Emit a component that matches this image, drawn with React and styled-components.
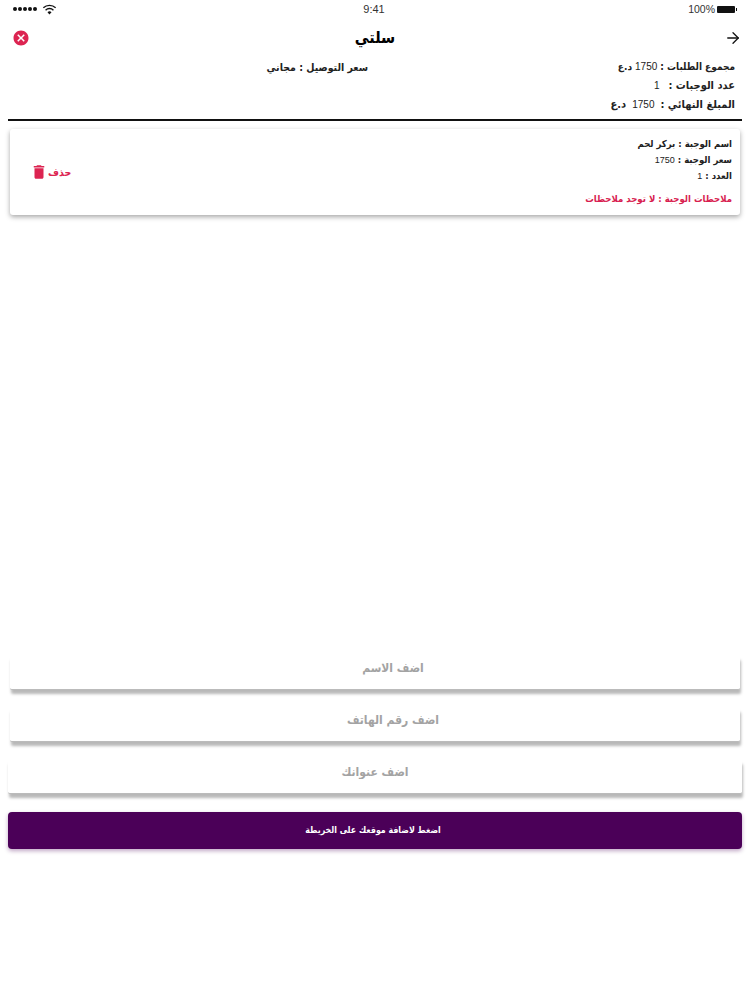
import React from 'react';
import styled, { createGlobalStyle } from 'styled-components';
import { MdCancel, MdDelete } from 'react-icons/md';
import { ArrowRight } from 'lucide-react';

const GlobalStyle = createGlobalStyle`
html, body {
  margin: 0;
  padding: 0;
  background: #fff;
}
* {
  box-sizing: border-box;
}
`

const Page = styled.div`
display: flex;
flex-direction: column;
width: 750px;
height: 1000px;
background: #fff;
font-family: "DejaVu Sans Condensed", "DejaVu Sans", sans-serif;
color: #111;
overflow: hidden;
`

const StatusBar = styled.div`
display: grid;
grid-template-columns: 1fr auto 1fr;
align-items: center;
height: 18px;
padding: 0 15px 0 13px;
font-family: "Liberation Sans", sans-serif;
font-size: 11px;
color: #333;
`
const StatusLeft = styled.div`
display: flex;
align-items: center;
gap: 5px;
`
const Dots = styled.div`
display: flex;
gap: 1px;
`
const Dot = styled.span`
width: 4px;
height: 4px;
border-radius: 50%;
background: #111;
`
const StatusRight = styled.div`
display: flex;
justify-content: flex-end;
align-items: center;
gap: 2px;
font-size: 10.5px;
`
const Battery = styled.div`
position: relative;
width: 18px;
height: 7px;
background: #111;
border-radius: 1px;
&::after {
  content: "";
  position: absolute;
  left: 19px;
  top: 2px;
  width: 1px;
  height: 3px;
  background: #111;
}
`

const Header = styled.div`
display: grid;
grid-template-columns: 1fr auto 1fr;
align-items: center;
height: 40px;
padding: 0 8px;
`
const Title = styled.h1`
margin: 0;
padding-bottom: 2px;
font-size: 16px;
font-weight: 700;
color: #000;
`
const CloseBtn = styled.div`
display: flex;
padding-left: 4px;
color: #dc2451;
`
const BackBtn = styled.div`
display: flex;
justify-content: flex-end;
color: #111;
`

const Summary = styled.div`
direction: rtl;
display: grid;
grid-template-columns: 367px 1fr;
height: 61px;
padding: 1px 15px 0;
align-content: start;
`
const SummaryCol = styled.div`
display: flex;
flex-direction: column;
gap: 3px;
`
const SummaryRow = styled.div`
display: flex;
gap: ${p => p.$gap || 3}px;
font-size: ${p => p.$size || 11}px;
font-weight: 700;
line-height: 16px;
white-space: nowrap;
color: #222;
`
const Num = styled.span`
font-family: "Liberation Sans", sans-serif;
font-weight: 400;
font-size: 10px;
`
const Divider = styled.div`
height: 2px;
margin: 0 8px;
background: #111;
`

const CartList = styled.div`
flex: 1;
padding: 8px 10px 0;
`
const ItemCard = styled.div`
direction: rtl;
display: flex;
justify-content: space-between;
align-items: center;
height: 86px;
padding: 0 8px 0 20px;
background: #fff;
border-radius: 3px;
box-shadow: 0 2px 5px rgba(0, 0, 0, 0.35);
`
const ItemInfo = styled.div`
display: flex;
flex-direction: column;
padding-bottom: 2px;
`
const ItemLine = styled.div`
font-size: 9.5px;
font-weight: 700;
line-height: 16px;
color: #222;
${Num} {
  font-size: 9px;
}
`
const ItemNote = styled(ItemLine)`
margin-top: 7px;
color: #d81e50;
`
const DeleteBtn = styled.div`
display: flex;
align-items: center;
font-size: 10.5px;
font-weight: 700;
color: #dc2451;
`

const Form = styled.div`
display: flex;
flex-direction: column;
gap: 18px;
padding: 0 8px 151px;
`
const FieldInput = styled.input`
display: block;
width: ${p => p.$wide ? 734 : 730}px;
margin: 0 auto;
height: 34px;
padding: 0 0 9px ${p => p.$wide ? 0 : 36}px;
border: none;
border-bottom: 1px solid #bbb;
border-radius: 2px;
outline: none;
background: #fff;
text-align: center;
direction: rtl;
font-family: inherit;
font-size: 12px;
font-weight: 700;
box-shadow: 1px 4px 3px rgba(0, 0, 0, 0.28);
&::placeholder {
  color: #a3a3a3;
  opacity: 1;
}
`
const MapBtn = styled.button`
height: 37px;
padding: 0 4px 2px 0;
border: none;
border-radius: 4px;
background: #4b0058;
color: #fff;
font-family: inherit;
font-size: 8.75px;
font-weight: 700;
box-shadow: 0 2px 4px rgba(75, 0, 88, 0.35);
`

const WifiIcon = () => (
    <svg width="15" height="11" viewBox="0 0 16 12">
        <path d="M8 11.5 5.8 9a3.2 3.2 0 0 1 4.4 0Z" fill="#111" />
        <path d="M3.7 6.7a6.2 6.2 0 0 1 8.6 0M1.3 4.2a9.6 9.6 0 0 1 13.4 0" fill="none" stroke="#111" strokeWidth="1.5" />
    </svg>
)

const App = () => {
    return (
        <Page>
            <GlobalStyle />
            <StatusBar>
                <StatusLeft>
                    <Dots>
                        <Dot /><Dot /><Dot /><Dot /><Dot />
                    </Dots>
                    <WifiIcon />
                </StatusLeft>
                <span>9:41</span>
                <StatusRight>
                    <span>100%</span>
                    <Battery />
                </StatusRight>
            </StatusBar>
            <Header>
                <CloseBtn><MdCancel size={18} /></CloseBtn>
                <Title>سلتي</Title>
                <BackBtn><ArrowRight size={18} strokeWidth={1.75} /></BackBtn>
            </Header>
            <Summary>
                <SummaryCol>
                    <SummaryRow $size={10}>مجموع الطلبات : <Num>1750</Num> د.ع</SummaryRow>
                    <SummaryRow $gap={9}>عدد الوجبات : <Num>1</Num></SummaryRow>
                    <SummaryRow $gap={6}>المبلغ النهائي : <Num>1750</Num> د.ع</SummaryRow>
                </SummaryCol>
                <SummaryCol>
                    <SummaryRow $size={10.5}>سعر التوصيل : مجاني</SummaryRow>
                </SummaryCol>
            </Summary>
            <Divider />
            <CartList>
                <ItemCard>
                    <ItemInfo>
                        <ItemLine>اسم الوجبة : بركر لحم</ItemLine>
                        <ItemLine>سعر الوجبة : <Num>1750</Num></ItemLine>
                        <ItemLine>العدد : <Num>1</Num></ItemLine>
                        <ItemNote>ملاحظات الوجبة : لا توجد ملاحظات</ItemNote>
                    </ItemInfo>
                    <DeleteBtn>
                        حذف
                        <MdDelete size={18} />
                    </DeleteBtn>
                </ItemCard>
            </CartList>
            <Form>
                <FieldInput placeholder="اضف الاسم" />
                <FieldInput placeholder="اضف رقم الهاتف" />
                <FieldInput $wide placeholder="اضف عنوانك" />
                <MapBtn>اضغط لاضافة موقعك على الخريطة</MapBtn>
            </Form>
        </Page>
    )
}

export default App;
